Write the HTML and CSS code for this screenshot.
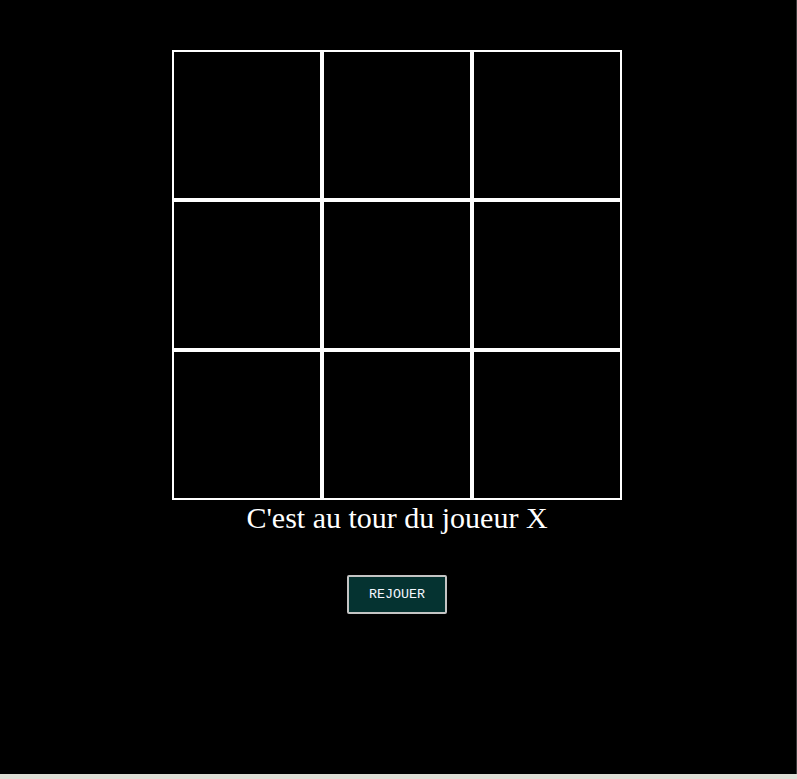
FILE: index.html
```html
<!DOCTYPE html>
<html lang="fr">
<head>
<meta charset="utf-8">
<title>Morpion</title>
<link rel="stylesheet" href="styles.css">
</head>
<body>
<div class="page">
  <main class="game">
    <div class="board">
      <div class="cell"></div>
      <div class="cell"></div>
      <div class="cell"></div>
      <div class="cell"></div>
      <div class="cell"></div>
      <div class="cell"></div>
      <div class="cell"></div>
      <div class="cell"></div>
      <div class="cell"></div>
    </div>
    <div class="status">C'est au tour du joueur X</div>
    <button class="replay" type="button">REJOUER</button>
  </main>
</div>
</body>
</html>
```
FILE: styles.css
```css
html {
  background: #dfdfd7;
}
body {
  margin: 0;
  background: #dfdfd7;
  font-family: "Liberation Serif", "Times New Roman", serif;
}
.page {
  height: 774px;
  background: #000;
  border-right: 1px solid #3a3a3a;
  box-sizing: border-box;
}
.game {
  width: 794px;
  display: flex;
  flex-direction: column;
  align-items: center;
  padding-top: 50px;
  box-sizing: border-box;
}
.board {
  display: grid;
  grid-template-columns: repeat(3, 150px);
  grid-template-rows: repeat(3, 150px);
}
.cell {
  box-sizing: border-box;
  border: 2px solid #fff;
  background: #000;
}
.status {
  color: #fff;
  font-size: 30px;
  line-height: 36px;
  text-align: center;
}
.replay {
  margin-top: 39px;
  padding: 10px 20px;
  font-family: "Liberation Mono", "Courier New", monospace;
  font-size: 13.33px;
  line-height: 15px;
  color: #f4f8ff;
  background: #053331;
  border: 2px solid #c4c4c4;
  border-radius: 2px;
  cursor: pointer;
}
```
